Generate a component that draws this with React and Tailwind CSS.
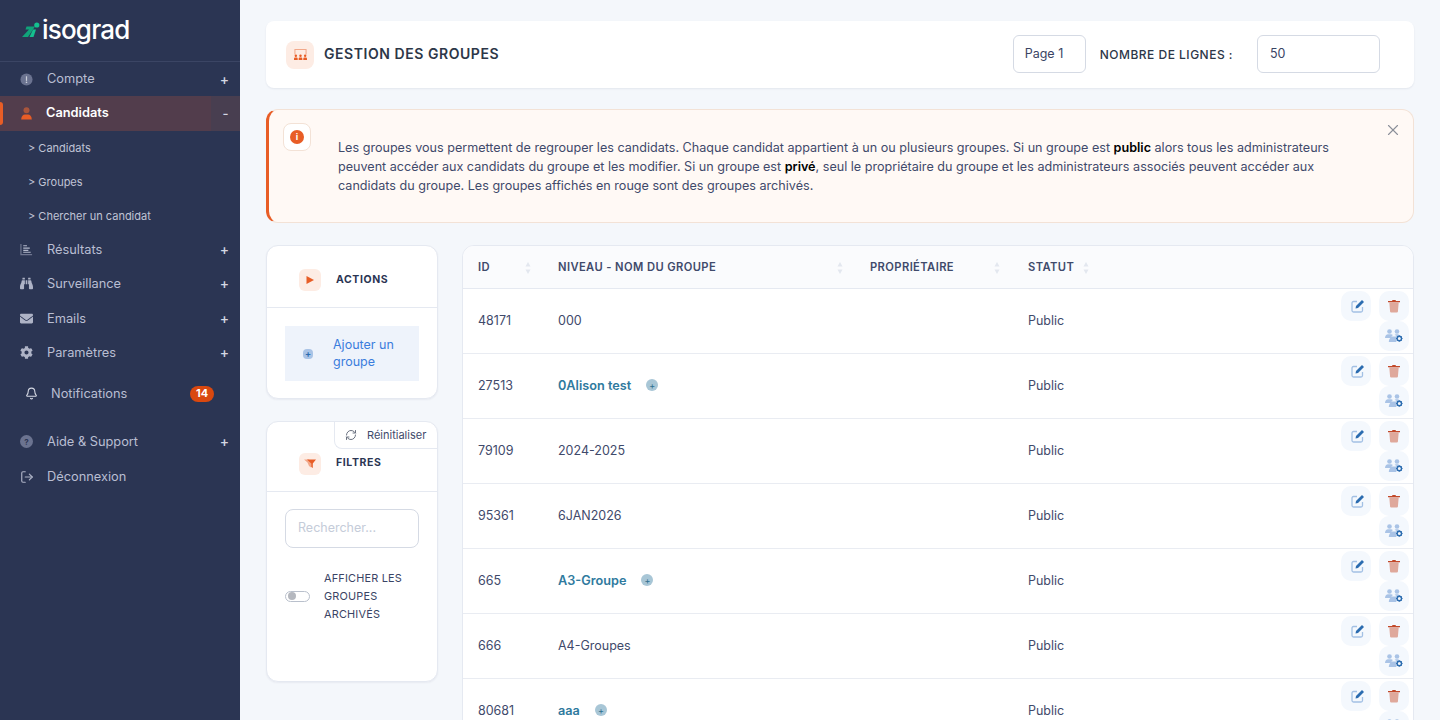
import { FaBinoculars, FaCog, FaEnvelope } from "react-icons/fa";
import { Bell, LogOut, RefreshCw, X } from "lucide-react";

function InfoDot() {
  return (
    <svg viewBox="0 0 14 14" className="h-[13px] w-[13px]">
      <circle cx="7" cy="7" r="6.5" fill="#6b7390" />
      <path d="M7 3.500v5" stroke="#c9cdd9" strokeWidth="1.300" />
      <circle cx="7" cy="10" r="0.900" fill="#c9cdd9" />
    </svg>
  );
}

function UserIcon() {
  return (
    <svg viewBox="0 0 14 14" className="h-[13px] w-[13px]">
      <circle cx="7" cy="3.600" r="3.200" fill="#a9553c" />
      <path d="M1.300 13.500c0-3.600 2.200-5.300 4-5.300h3.400c1.800 0 4 1.700 4 5.300z" fill="#e85d26" />
    </svg>
  );
}

function ResultsIcon() {
  return (
    <svg viewBox="0 0 14 14" className="h-[13px] w-[13px]">
      <path d="M1 1v11.500h12" fill="none" stroke="#6f7690" strokeWidth="1.300" />
      <path d="M3.500 3h4M3.500 5.500h7M3.500 8h5.500M3.500 10h8" stroke="#b4b9cb" strokeWidth="1.200" />
    </svg>
  );
}

function HelpDot() {
  return (
    <div className="flex h-[13px] w-[13px] items-center justify-center rounded-full bg-[#6b7390] text-[8px] font-bold text-[#2b3553]">
      ?
    </div>
  );
}

function Logo() {
  return (
    <div className="flex items-center">
      <svg viewBox="0 0 18 16" className="h-[16px] w-[18px]">
        <path d="M0 15 7 7.500H3.500L4.500 4.500H13L6 15z" fill="#10a37a" />
        <path d="M7.500 15 11 7.500h3L11.500 15z" fill="#14c08f" />
        <circle cx="14.800" cy="3" r="2.600" fill="#14c08f" />
      </svg>
      <span className="ml-[2px] text-[26px] leading-none font-medium tracking-[-0.8px] text-white">isograd</span>
    </div>
  );
}

function MenuItem({ icon, label }) {
  return (
    <div className="flex h-[34.400px] items-center pl-[20px] pr-[11px] text-[12.800px] text-[#b9bed2]">
      <div className="flex w-[27px] items-center">{icon}</div>
      <span className="flex-1">{label}</span>
      <span className="text-[14px] font-medium text-[#d5d8e3]">+</span>
    </div>
  );
}

function SubItem({ label }) {
  return <div className="flex h-[34px] items-center pl-[28px] text-[11px] text-[#c0c4d5]">{"> " + label}</div>;
}

function Sidebar() {
  return (
    <aside className="flex h-full w-[240px] shrink-0 flex-col bg-[#2b3553]">
      <div className="flex h-[62px] shrink-0 items-center border-b border-[#3b4564] pl-[22px] pb-[1px]">
        <Logo />
      </div>
      <div className="flex h-[34px] items-center pl-[20px] pr-[11px] text-[12.800px] text-[#b9bed2]">
        <div className="flex w-[27px] items-center">
          <InfoDot />
        </div>
        <span className="flex-1">Compte</span>
        <span className="text-[14px] font-medium text-[#d5d8e3]">+</span>
      </div>
      <div className="flex h-[35px] items-center bg-[#523d4c]">
        <div className="h-[23px] w-[3px] rounded-r-sm bg-[#e85d26]" />
        <div className="ml-[17px] w-[26px]">
          <UserIcon />
        </div>
        <span className="mb-[1px] flex-1 text-[12.800px] font-semibold text-white">Candidats</span>
        <div className="flex h-full w-[29px] items-center justify-center bg-[#483e50] text-[13px] font-medium text-[#d5d8e3]">-</div>
      </div>
      <SubItem label="Candidats" />
      <SubItem label="Groupes" />
      <SubItem label="Chercher un candidat" />
      <div className="mt-[-0.6px]">
        <MenuItem icon={<ResultsIcon />} label="Résultats" />
        <MenuItem icon={<FaBinoculars className="h-[13px] w-[13px] text-[#aeb3c6]" />} label="Surveillance" />
        <MenuItem icon={<FaEnvelope className="h-[13px] w-[13px] text-[#aeb3c6]" />} label="Emails" />
        <MenuItem icon={<FaCog className="h-[13px] w-[13px] text-[#aeb3c6]" />} label="Paramètres" />
      </div>
      <div className="flex h-[47.400px] items-center pl-[25px] pr-[26px] text-[12.800px] text-[#b9bed2]">
        <div className="w-[26px]">
          <Bell className="h-[13px] w-[13px] text-[#d5d8e3]" />
        </div>
        <span className="flex-1">Notifications</span>
        <span className="flex h-[16px] w-[24px] items-center justify-center rounded-full bg-[#d9480f] text-[11px] font-bold text-white">14</span>
      </div>
      <div className="h-[7px]" />
      <MenuItem icon={<HelpDot />} label="Aide & Support" />
      <div className="flex h-[36px] items-center pl-[20px] text-[12.800px] text-[#b9bed2]">
        <div className="w-[27px]">
          <LogOut className="h-[14px] w-[14px] text-[#aeb3c6]" />
        </div>
        Déconnexion
      </div>
    </aside>
  );
}

function GroupsIcon() {
  return (
    <svg viewBox="0 0 16 14" className="h-[13px] w-[15px]">
      <path d="M2 7V1.500h12V7" fill="none" stroke="#f2a88a" strokeWidth="1.100" />
      <circle cx="3" cy="8.300" r="1.300" fill="#e85d26" />
      <circle cx="8" cy="8.300" r="1.300" fill="#e85d26" />
      <circle cx="13" cy="8.300" r="1.300" fill="#e85d26" />
      <path d="M1 13v-1.500c0-.8.6-1.300 1.300-1.300h1.400c.7 0 1.300.5 1.300 1.300V13zM6 13v-1.500c0-.8.6-1.300 1.300-1.300h1.400c.7 0 1.300.5 1.300 1.300V13zM11 13v-1.500c0-.8.6-1.300 1.300-1.300h1.400c.7 0 1.300.5 1.300 1.300V13z" fill="#e85d26" />
    </svg>
  );
}

function Header() {
  return (
    <div className="flex h-[67px] shrink-0 items-center rounded-lg bg-white pl-[20px] pr-[34px] shadow-[0_1px_2px_rgba(30,41,80,0.08)]">
      <div className="flex h-[28px] w-[28px] items-center justify-center rounded-lg bg-[#fdece4]">
        <GroupsIcon />
      </div>
      <h1 className="mb-[2px] ml-[10px] flex-1 text-[14px] font-semibold tracking-[0.55px] text-[#2d3748]">GESTION DES GROUPES</h1>
      <div className="mb-[1px] flex h-[38px] w-[73px] items-center rounded-md border border-[#d5dae4] pl-[11px] text-[12.500px] text-[#3a4464]">Page 1</div>
      <span className="ml-[14px] text-[12px] font-medium tracking-[0.5px] text-[#2d3748]">NOMBRE DE LIGNES :</span>
      <div className="mb-[1px] ml-[24px] flex h-[38px] w-[123px] items-center rounded-md border border-[#d5dae4] pl-[12px] text-[12.500px] text-[#3a4464]">50</div>
    </div>
  );
}

function Alert() {
  return (
    <div className="mt-[21px] flex h-[114px] shrink-0 rounded-xl border border-l-[3px] border-[#f3e2d6] border-l-[#e85d26] bg-[#fff9f5] pl-[14px] pr-[11px] pt-[13px]">
      <div className="flex h-[28px] w-[28px] shrink-0 items-center justify-center rounded-lg border border-[#f3e2d6] bg-white">
        <div className="flex h-[14px] w-[14px] items-center justify-center rounded-full bg-[#e85d26] text-[9px] font-bold text-white">i</div>
      </div>
      <p className="ml-[27px] w-[1012px] pt-[15px] text-[12.600px] leading-[19px] text-[#3f4a6b]">
        Les groupes vous permettent de regrouper les candidats. Chaque candidat appartient à un ou plusieurs groupes. Si un groupe est{" "}
        <b className="font-semibold text-black">public</b> alors tous les administrateurs peuvent accéder aux candidats du groupe et les modifier. Si un groupe est{" "}
        <b className="font-semibold text-black">privé</b>, seul le propriétaire du groupe et les administrateurs associés peuvent accéder aux candidats du groupe. Les groupes affichés en rouge sont des groupes archivés.
      </p>
      <X className="ml-auto mt-[-2px] h-[18px] w-[18px] shrink-0 text-[#8b8f99]" strokeWidth={1.500} />
    </div>
  );
}

function ActionsCard() {
  return (
    <div className="h-[154px] rounded-xl border border-[#e5e9f1] bg-white shadow-[0_1px_2px_rgba(30,41,80,0.06)]">
      <div className="flex h-[62px] items-center border-b border-[#e5e9f1] pl-[32px] pt-[7px]">
        <div className="flex h-[22px] w-[22px] items-center justify-center rounded-md bg-[#fdece4]">
          <svg viewBox="0 0 10 10" className="h-[10px] w-[10px]">
            <path d="M1.500 1 9 5 1.500 9z" fill="#e85d26" />
          </svg>
        </div>
        <span className="mb-[1px] ml-[15px] text-[10.500px] font-bold tracking-[0.6px] text-[#2b3553]">ACTIONS</span>
      </div>
      <div className="mx-[18px] mt-[18px] flex h-[55px] items-center bg-[#eef3fb] pl-[18px]">
        <div className="flex h-[10px] w-[10px] items-center justify-center rounded-sm bg-[#a9c3e6] text-[9px] leading-none font-bold text-[#2b6cb0]">+</div>
        <span className="mb-[2px] ml-[20px] w-[70px] text-[12.500px] leading-[17px] text-[#3b7ddd]">Ajouter un groupe</span>
      </div>
    </div>
  );
}

function FiltersCard() {
  return (
    <div className="mt-[22px] h-[261px] overflow-hidden rounded-xl border border-[#e5e9f1] bg-white shadow-[0_1px_2px_rgba(30,41,80,0.06)]">
      <div className="flex justify-end">
        <div className="flex h-[27px] w-[103px] items-center rounded-bl-lg border-b border-l border-[#e5e9f1] pl-[10px] text-[11px] text-[#3f4a6b]">
          <RefreshCw className="h-[12px] w-[12px] text-[#6b7280]" />
          <span className="ml-[10px]">Réinitialiser</span>
        </div>
      </div>
      <div className="h-[43px] border-b border-[#e5e9f1] pl-[32px] pt-[4px]">
        <div className="flex items-center">
          <div className="flex h-[22px] w-[22px] items-center justify-center rounded-md bg-[#fdece4]">
            <svg viewBox="0 0 12 10" className="h-[10px] w-[12px]">
              <path d="M0 .5h5l2 3v5L5 7 3.500 3.500z" fill="#f2a88a" />
              <path d="M3 .5h9L8.800 4.500V9L7.200 8V4.500z" fill="#e85d26" />
            </svg>
          </div>
          <span className="mb-[2px] ml-[15px] text-[10.500px] font-bold tracking-[0.6px] text-[#2b3553]">FILTRES</span>
        </div>
      </div>
      <div className="mx-[18px] mt-[17px] flex h-[39px] items-center rounded-lg border border-[#d5dae4] pl-[12px] text-[12.500px] text-[#c5ccd9]">Rechercher...</div>
      <div className="mx-[18px] mt-[21px] flex items-center">
        <div className="flex h-[11px] w-[25px] items-center rounded-full border border-[#b9c0cc] bg-white pl-[2px]">
          <div className="h-[8px] w-[8px] rounded-full bg-[#b5b8bf]" />
        </div>
        <span className="ml-[14px] text-[10.900px] leading-[18px] tracking-[0.2px] text-[#3a4464]">
          AFFICHER LES
          <br />
          GROUPES
          <br />
          ARCHIVÉS
        </span>
      </div>
    </div>
  );
}

function SortArrows() {
  return (
    <svg viewBox="0 0 6 14" className="h-[14px] w-[6px] shrink-0">
      <path d="M3 1 5.500 5.500h-5zM3 13 .5 8.500h5z" fill="#e3e7ef" />
    </svg>
  );
}

function EditIcon() {
  return (
    <svg viewBox="0 0 14 14" className="ml-[3px] h-[14px] w-[14px]">
      <path d="M6 2.500H2.500a1.500 1.500 0 0 0-1.500 1.500v7.500a1.500 1.500 0 0 0 1.500 1.500H10a1.500 1.500 0 0 0 1.500-1.500V8" fill="none" stroke="#a3c0e4" strokeWidth="1.300" />
      <path d="M4.500 9.500 5 7l6-6 2 2-6 6z" fill="#2b6cb0" />
    </svg>
  );
}

function TrashIcon() {
  return (
    <svg viewBox="0 0 12 14" className="h-[14px] w-[12px]">
      <path d="M1.300 3.500h9.400l-.8 9.200a1 1 0 0 1-1 .8H3.100a1 1 0 0 1-1-.8z" fill="#dfa89b" />
      <path d="M0 2h4l.5-1h3l.5 1h4v1.300H0z" fill="#c2492a" />
    </svg>
  );
}

function UsersCogIcon() {
  return (
    <svg viewBox="0 0 18 15" className="h-[15px] w-[18px]">
      <circle cx="4.500" cy="3.500" r="2.300" fill="#a9c3e6" />
      <circle cx="12" cy="3.500" r="2.300" fill="#a9c3e6" />
      <path d="M0 10c0-2.500 1.500-3.800 3-3.800h3c.8 0 1.400.3 1.800.8C6.800 8 6.300 9 6.200 10z" fill="#a9c3e6" />
      <path d="M3.800 14c0-3 2-5.500 4-5.500h3.500V14z" fill="#a9c3e6" />
      <path d="M9.500 7c.4-.5 1-.8 1.500-.8h2.500l.5 1.500-2 1.300-.8-1.500z" fill="#a9c3e6" />
      <circle cx="14.300" cy="10.500" r="2.200" fill="none" stroke="#2b6cb0" strokeWidth="1.400" />
      <path d="M14.300 7.300v1.200M14.300 12.500v1.200M11.100 10.500h1.200M16.300 10.500h1.200M12 8.200l.9.900M15.700 11.900l.9.900M12 12.800l.9-.9M15.700 9.100l.9-.9" stroke="#2b6cb0" strokeWidth="1" />
    </svg>
  );
}

function IconButton({ children }) {
  return <div className="flex h-[30px] w-[30px] items-center justify-center rounded-[10px] bg-[#f4f8fd]">{children}</div>;
}

const rows = [
  { id: "48171", name: "000" },
  { id: "27513", name: "0Alison test", link: true },
  { id: "79109", name: "2024-2025" },
  { id: "95361", name: "6JAN2026" },
  { id: "665", name: "A3-Groupe", link: true },
  { id: "666", name: "A4-Groupes" },
  { id: "80681", name: "aaa", link: true },
];

function GroupsTable() {
  return (
    <div className="ml-[24px] min-w-0 flex-1 overflow-hidden rounded-t-xl border border-[#e5e9f1] bg-white">
      <table className="w-full table-fixed border-collapse">
        <thead>
          <tr className="h-[42px] border-b border-[#e5e9f1] bg-[#fafbfd] text-[11.200px] font-semibold tracking-[0.4px] text-[#3f4a6b]">
            <th className="w-[80px] pl-[15px] pr-[12px] pt-[2px] text-left font-semibold">
              <div className="flex items-center justify-between">
                ID <SortArrows />
              </div>
            </th>
            <th className="w-[312px] pl-[15px] pr-[12px] pt-[2px] text-left font-semibold">
              <div className="flex items-center justify-between">
                NIVEAU - NOM DU GROUPE <SortArrows />
              </div>
            </th>
            <th className="w-[158px] pl-[15px] pr-[13px] pt-[2px] text-left font-semibold">
              <div className="flex items-center justify-between">
                PROPRIÉTAIRE <SortArrows />
              </div>
            </th>
            <th className="w-[89px] pl-[15px] pr-[13px] pt-[2px] text-left font-semibold">
              <div className="flex items-center justify-between">
                STATUT <SortArrows />
              </div>
            </th>
            <th />
          </tr>
        </thead>
        <tbody>
          {rows.map((row) => (
            <tr key={row.id} className="h-[65px] border-b border-[#e9ecf2] text-[12.500px] text-[#3f4a6b]">
              <td className="pl-[15px] pt-[2px]">{row.id}</td>
              <td className={row.link ? "pl-[15px]" : "pl-[15px] pt-[2px]"}>
                {row.link ? (
                  <div className="flex items-center">
                    <span className="text-[12.700px] font-semibold text-[#2f7a9e]">{row.name}</span>
                    <span className="ml-[15px] flex h-[12px] w-[12px] items-center justify-center rounded-full bg-[#a8c6d6] text-[9px] leading-none text-[#2f6f8f]">+</span>
                  </div>
                ) : (
                  row.name
                )}
              </td>
              <td />
              <td className="pl-[15px] pt-[2px]">Public</td>
              <td className="pr-[4px]">
                <div className="ml-auto flex w-[68px] flex-wrap justify-end gap-x-[8px]">
                  <IconButton>
                    <EditIcon />
                  </IconButton>
                  <IconButton>
                    <TrashIcon />
                  </IconButton>
                  <IconButton>
                    <UsersCogIcon />
                  </IconButton>
                </div>
              </td>
            </tr>
          ))}
        </tbody>
      </table>
    </div>
  );
}

export default function App() {
  return (
    <div className="flex h-screen overflow-hidden bg-[#f4f7fb] font-['Inter',sans-serif]">
      <Sidebar />
      <main className="flex min-w-0 flex-1 flex-col pl-[26px] pr-[26px] pt-[21px]">
        <Header />
        <Alert />
        <div className="mt-[22px] flex min-h-0 flex-1 items-start">
          <div className="w-[172px] shrink-0">
            <ActionsCard />
            <FiltersCard />
          </div>
          <GroupsTable />
        </div>
      </main>
    </div>
  );
}
